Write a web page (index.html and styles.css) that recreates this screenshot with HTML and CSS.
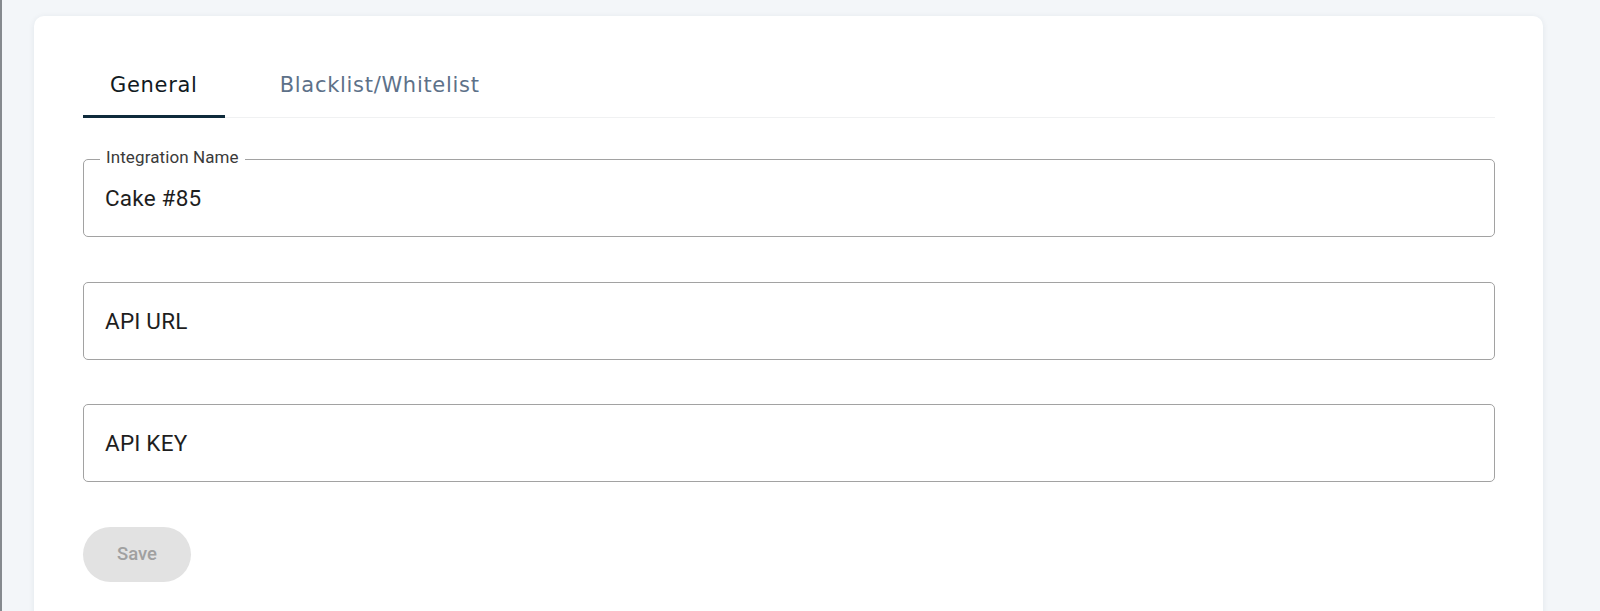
FILE: index.html
```html
<!DOCTYPE html>
<html lang="en">
<head>
<meta charset="utf-8">
<title>Integration</title>
<link rel="stylesheet" href="styles.css">
</head>
<body>
<div class="page">
  <div class="card">
    <div class="tabs">
      <div class="tab active">General</div>
      <div class="tab">Blacklist/Whitelist</div>
    </div>
    <div class="form">
      <div class="field">
        <span class="field-label">Integration Name</span>
        <span class="field-value">Cake #85</span>
      </div>
      <div class="field">
        <span class="field-value">API URL</span>
      </div>
      <div class="field">
        <span class="field-value">API KEY</span>
      </div>
      <button class="save" disabled>Save</button>
    </div>
  </div>
</div>
</body>
</html>
```
FILE: styles.css
```css
* { box-sizing: border-box; }
html, body { margin: 0; padding: 0; height: 100%; }
body {
  background: #f3f6f9;
  overflow: hidden;
  font-family: Roboto, "Liberation Sans", sans-serif;
}
.page {
  min-height: 100vh;
  border-left: 2px solid #858a8f;
  padding: 16px 0 0 32px;
}
.card {
  width: 1509px;
  min-height: 700px;
  background: #ffffff;
  border-radius: 10px;
  box-shadow: 0 1px 6px rgba(30, 50, 80, 0.08);
  padding: 32px 48px 0 49px;
}
.tabs {
  display: flex;
  gap: 28px;
  border-bottom: 1px solid #f0f1f2;
  height: 70px;
}
.tab {
  font-family: "DejaVu Sans", sans-serif;
  font-size: 21px;
  letter-spacing: 0.7px;
  color: #5d7189;
  padding: 6px 27px 0 27px;
  display: flex;
  align-items: center;
  height: 70px;
  margin-bottom: -1px;
  border-bottom: 3px solid transparent;
}
.tab.active {
  color: #111a22;
  border-bottom-color: #0e2a3b;
}
.form {
  display: flex;
  flex-direction: column;
  align-items: flex-start;
  gap: 44.5px;
  padding-top: 41px;
}
.field {
  position: relative;
  width: 100%;
  height: 78px;
  border: 1px solid #a2a2a2;
  border-radius: 5px;
  display: flex;
  align-items: center;
  padding-left: 21px;
}
.field-label {
  position: absolute;
  top: -13px;
  left: 16px;
  padding: 0 6px;
  background: #ffffff;
  font-size: 17px;
  line-height: 20px;
  color: #3a3a3a;
  letter-spacing: 0.1px;
}
.field-value {
  font-size: 22.5px;
  color: #1e1e1e;
  letter-spacing: 0.2px;
}
.save {
  width: 108px;
  height: 55px;
  border: none;
  border-radius: 28px;
  background: #e2e2e2;
  color: #a0a0a0;
  font-family: Roboto, "Liberation Sans", sans-serif;
  font-weight: 500;
  font-size: 18.5px;
  padding: 0;
}
```
